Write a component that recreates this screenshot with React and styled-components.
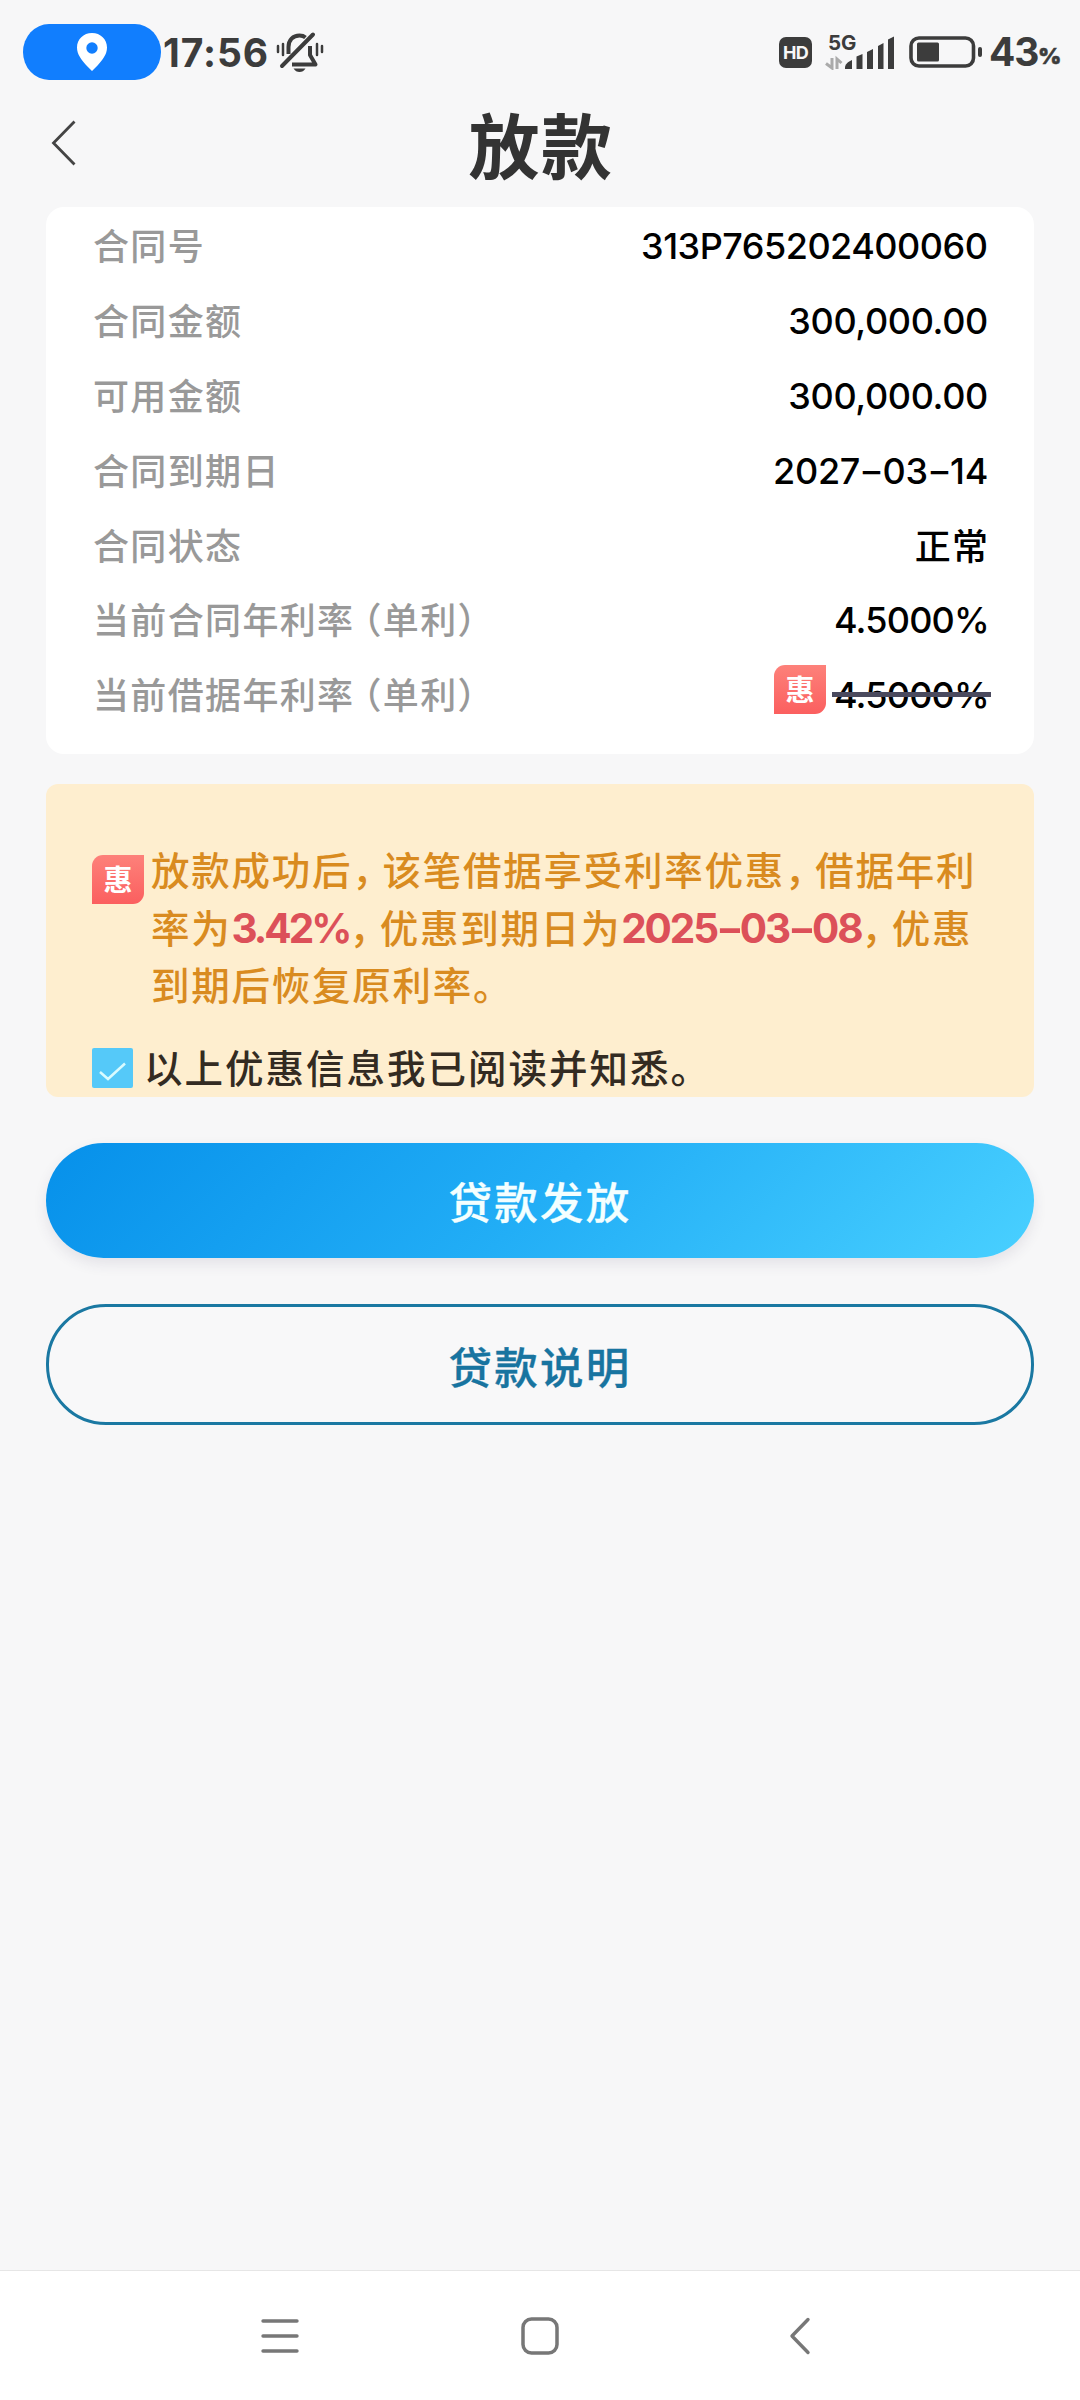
import React from 'react';
import styled, { createGlobalStyle } from 'styled-components';

const GlobalStyle = createGlobalStyle`
  * {
    box-sizing: border-box;
  }

  body {
    margin: 0;
    background: #f7f7f7;
    font-family: Inter, 'Noto Sans CJK SC', sans-serif;
  }
`;

const Screen = styled.div`
  display: flex;
  flex-direction: column;
  width: 1080px;
  height: 2400px;
  overflow: hidden;
  background: #f7f7f8;
`;

const StatusBar = styled.div`
  display: flex;
  justify-content: space-between;
  align-items: center;
  height: 104px;
  padding: 0 22px 0 23px;
  color: #3c3c3c;
`;

const StatusGroup = styled.div`
  display: flex;
  align-items: center;
`;

const LocationPill = styled.div`
  display: flex;
  justify-content: center;
  align-items: center;
  width: 138px;
  height: 56px;
  border-radius: 26px / 28px;
  background: #117efe;
`;

const Clock = styled.div`
  width: 115px;
  padding: 2px 0 0 2px;
  font-size: 39px;
  font-weight: 700;
  line-height: 56px;
  letter-spacing: 0.9px;
  white-space: nowrap;
`;

const HdBadge = styled.div`
  width: 33px;
  height: 31px;
  margin-right: 13px;
  border-radius: 7px;
  background: #3c3c3c;
  color: #f7f7f7;
  font-size: 18px;
  font-weight: 700;
  line-height: 31px;
  letter-spacing: -0.8px;
  text-align: center;
`;

const Signal = styled.div`
  position: relative;
  width: 70px;
  height: 36px;
  margin-right: 14px;
`;

const NetworkType = styled.span`
  position: absolute;
  top: -1px;
  left: 3px;
  font-size: 20.5px;
  font-weight: 700;
  line-height: 20px;
`;

const Percent = styled.div`
  display: flex;
  align-items: baseline;
  width: 69px;
  margin-left: 6px;
  padding-top: 6px;
  font-size: 39px;
  font-weight: 700;
  line-height: 56px;
  letter-spacing: -1.2px;

  small {
    position: relative;
    top: -2px;
    font-size: 22px;
    font-weight: 900;
    -webkit-text-stroke: 0.5px currentColor;
  }
`;

const Header = styled.header`
  display: grid;
  grid-template-columns: 80px 1fr 80px;
  align-items: center;
  height: 80px;
  margin-bottom: 23px;
`;

const BackButton = styled.button`
  display: flex;
  padding: 0 0 3px 51px;
  border: 0;
  background: none;
`;

const Title = styled.h1`
  margin: 0;
  padding: 6px 0 0 2px;
  color: #333;
  font-size: 71px;
  font-weight: 700;
  line-height: 74px;
  letter-spacing: 1.5px;
  text-align: center;
`;

const Content = styled.main`
  display: flex;
  flex: 1;
  flex-direction: column;
  padding: 0 46px;
`;

const ContractCard = styled.section`
  height: 547px;
  padding: 1px 46px 0 47px;
  border-radius: 18px;
  background: #fff;
`;

const Row = styled.div`
  display: flex;
  justify-content: space-between;
  align-items: center;
  height: 74.9px;
`;

const Label = styled.span`
  padding-bottom: 3px;
  color: #999;
  font-size: 36px;
  font-weight: 500;
  letter-spacing: 1.35px;
  white-space: nowrap;
`;

const OpenParen = styled.span`
  margin-left: 9px;
  font-feature-settings: 'halt';
`;

const Value = styled.span`
  display: flex;
  align-items: center;
  padding-top: ${({ $lift }) => ($lift ? 0 : 1)}px;
  padding-bottom: ${({ $lift }) => $lift || 0}px;
  color: #000;
  font-size: 36px;
  font-weight: 500;
  letter-spacing: ${({ $spacing }) => $spacing || 0}px;
  margin-right: ${({ $pull }) => -($pull || 0)}px;
  white-space: nowrap;
`;

const Dash = styled.span`
  display: inline-block;
  margin: 0 3px;
  transform: scaleX(1.5);
`;

const StruckRate = styled.span`
  position: relative;

  &::after {
    position: absolute;
    top: 19px;
    right: -2px;
    left: -2px;
    height: 5px;
    background: #4a4a5e;
    content: '';
  }
`;

const DiscountTag = styled.span`
  flex: none;
  width: 52px;
  height: 49px;
  margin: ${({ $margin }) => $margin || 0};
  border-radius: 11px 0;
  background: linear-gradient(180deg, #fd817a, #fb5f5f);
  color: #fff;
  font-size: 29px;
  font-weight: 700;
  line-height: 51px;
  letter-spacing: 0;
  text-align: center;
`;

const NoticeCard = styled.section`
  height: 313px;
  margin-top: 30px;
  padding: 59px 46px 0;
  border-radius: 12px;
  background: #feeecf;
`;

const NoticeBody = styled.div`
  display: flex;
  align-items: flex-start;
`;

const NoticeText = styled.p`
  margin: 0;
  color: #d98b20;
  font-size: 38.5px;
  font-weight: 500;
  line-height: 57.5px;
  letter-spacing: 1.75px;
  white-space: nowrap;
`;

const Comma = styled.span`
  font-feature-settings: 'halt';
  letter-spacing: 11px;
`;

const Highlight = styled.strong`
  color: #dc5059;
  font-size: 40.5px;
  font-weight: 700;
  line-height: 1;
  letter-spacing: ${({ $spacing }) => $spacing}px;
`;

const Agreement = styled.label`
  display: flex;
  align-items: center;
  margin-top: 24px;
  color: #332b22;
  font-size: 38.5px;
  font-weight: 500;
  line-height: 56px;
  letter-spacing: 2px;
  white-space: nowrap;
`;

const AgreementText = styled.span`
  padding-top: 2px;
  line-height: 54px;
`;

const Checkbox = styled.span`
  width: 41px;
  height: 40px;
  margin-right: 11px;
  border-radius: 2px;
  background: #55c9f9;
`;

const ActionButton = styled.button`
  width: 100%;
  height: ${({ $outline }) => ($outline ? 121 : 115)}px;
  margin-top: 46px;
  padding: ${({ $outline }) => ($outline ? '2px 0 0' : '0')};
  border: ${({ $outline }) => ($outline ? '3px solid #1a78a2' : '0')};
  border-radius: 60px;
  background: ${({ $outline }) =>
    $outline ? '#f8f8f9' : 'linear-gradient(135deg, #0690ea, #22aef6 50%, #49d0ff)'};
  box-shadow: ${({ $outline }) => ($outline ? 'none' : '0 6px 14px rgba(60, 50, 90, 0.1)')};
  color: ${({ $outline }) => ($outline ? '#1874a0' : '#f4ffff')};
  font-family: inherit;
  font-size: 43.5px;
  font-weight: 500;
  letter-spacing: 2.3px;
  -webkit-text-stroke: 0.3px currentColor;
`;

const SystemNav = styled.nav`
  display: flex;
  justify-content: space-between;
  align-items: center;
  height: 130px;
  padding: 0 269px 0 261px;
  border-top: 1px solid #e6e6e6;
  background: #fff;
`;

const PinIcon = () => (
  <svg width="32" height="40" viewBox="0 0 32 40">
    <path
      d="M16 1C7.5 1 1 7.3 1 15.5c0 7 4.500 12 9 17.500L16 39l6-6c4.500-5.500 9-10.500 9-17.500C31 7.300 24.500 1 16 1z"
      fill="#fff"
    />
    <circle cx="16" cy="16" r="5.700" fill="#117efe" />
  </svg>
);

const MutedBellIcon = () => (
  <svg width="48" height="42" viewBox="0 0 48 42" fill="none" stroke="#3c3c3c">
    <path d="M2 15v6M46 15v6" strokeWidth="2.500" strokeLinecap="round" />
    <path d="M7 13v11M41 13v11" strokeWidth="2.500" strokeLinecap="round" />
    <path
      d="M12.500 23v-7c0-7 4.500-11.500 11-11.500 2.500 0 4.500.7 6 2"
      strokeWidth="4"
    />
    <path d="M34 15v9l5.500 9.500H16" strokeWidth="4" strokeLinejoin="round" />
    <path d="M37 3.500L6 35" strokeWidth="4" strokeLinecap="round" />
    <path d="M17.500 37.500h12c-1.500 2.500-3.500 3.500-6 3.500s-4.500-1-6-3.500z" fill="#3c3c3c" stroke="none" />
  </svg>
);

const SignalIcon = () => (
  <svg width="70" height="36" viewBox="0 0 70 36" fill="#3c3c3c">
    <path d="M7 24v10L1 29.500M12 35V25l4.500 4" fill="none" stroke="#aaa" strokeWidth="3" />
    <path d="M20 33.500c0-3 3-6 7-7.500v9h-7z" />
    <path d="M31.500 22.500l6-2.500v15h-6z" />
    <path d="M42 18l6-3v20h-6z" />
    <path d="M53 12l5.500-3v26H53z" />
    <path d="M63 5.500l6-3V35h-6z" />
  </svg>
);

const BatteryIcon = () => (
  <svg width="74" height="32" viewBox="0 0 74 32">
    <rect x="2" y="2" width="62.500" height="28" rx="8" fill="none" stroke="#3c3c3c" strokeWidth="3.600" />
    <rect x="8" y="6.500" width="22" height="19" rx="1.500" fill="#3c3c3c" />
    <rect x="69" y="11" width="4" height="10" rx="2" fill="#3c3c3c" />
  </svg>
);

const ContractLabel = ({ text, suffix }) => (
  <Label>
    {text}
    {suffix && (
      <>
        <OpenParen>（</OpenParen>
        {suffix}）
      </>
    )}
  </Label>
);

const rows = [
  { label: '合同号', value: '313P765202400060', spacing: -0.5, pull: -0.5 },
  { label: '合同金额', value: '300,000.00', spacing: -0.35 },
  { label: '可用金额', value: '300,000.00', spacing: -0.35 },
  {
    label: '合同到期日',
    value: (
      <span>
        2027<Dash>-</Dash>03<Dash>-</Dash>14
      </span>
    ),
    spacing: -0.3,
  },
  { label: '合同状态', value: '正常', spacing: 1.35, pull: 1.35, lift: 3 },
  { label: '当前合同年利率', suffix: '单利', value: '4.5000%', spacing: -0.8, pull: 1 },
];

const App = () => (
  <>
    <GlobalStyle />
    <Screen>
      <StatusBar>
        <StatusGroup>
          <LocationPill>
            <PinIcon />
          </LocationPill>
          <Clock>17:56</Clock>
          <MutedBellIcon />
        </StatusGroup>
        <StatusGroup>
          <HdBadge>HD</HdBadge>
          <Signal>
            <NetworkType>5G</NetworkType>
            <SignalIcon />
          </Signal>
          <BatteryIcon />
          <Percent>
            43<small>%</small>
          </Percent>
        </StatusGroup>
      </StatusBar>

      <Header>
        <BackButton>
          <svg width="26" height="46" viewBox="0 0 26 46" fill="none" stroke="#444" strokeWidth="2.800">
            <path d="M23.500 1.500L2.500 23l21 21.500" />
          </svg>
        </BackButton>
        <Title>放款</Title>
      </Header>

      <Content>
        <ContractCard>
          {rows.map(row => (
            <Row key={row.label}>
              <ContractLabel text={row.label} suffix={row.suffix} />
              <Value $spacing={row.spacing} $pull={row.pull} $lift={row.lift}>
                {row.value}
              </Value>
            </Row>
          ))}
          <Row>
            <ContractLabel text="当前借据年利率" suffix="单利" />
            <Value $spacing={-0.8} $pull={1}>
              <DiscountTag $margin="-11px 8px 0 0">惠</DiscountTag>
              <StruckRate>4.5000%</StruckRate>
            </Value>
          </Row>
        </ContractCard>

        <NoticeCard>
          <NoticeBody>
            <DiscountTag $margin="12px 7px 0 0">惠</DiscountTag>
            <NoticeText>
              放款成功后<Comma>，</Comma>该笔借据享受利率优惠<Comma>，</Comma>借据年利
              <br />
              率为<Highlight $spacing={-3}>3.42%</Highlight>
              <Comma>，</Comma>优惠到期日为
              <Highlight $spacing={-2.1}>
                2025<Dash>-</Dash>03<Dash>-</Dash>08
              </Highlight>
              <Comma>，</Comma>优惠
              <br />
              到期后恢复原利率。
            </NoticeText>
          </NoticeBody>
          <Agreement>
            <Checkbox>
              <svg width="41" height="40" viewBox="0 0 41 40" fill="none" stroke="#d9fbff" strokeWidth="2.500">
                <path d="M8 22l8 7L33 13.500" />
              </svg>
            </Checkbox>
            <AgreementText>以上优惠信息我已阅读并知悉。</AgreementText>
          </Agreement>
        </NoticeCard>

        <ActionButton>贷款发放</ActionButton>
        <ActionButton $outline>贷款说明</ActionButton>
      </Content>

      <SystemNav>
        <svg width="38" height="36" viewBox="0 0 38 36" stroke="#777" strokeWidth="3.400" strokeLinecap="round">
          <path d="M2 3h34M2 18h34M2 33h34" />
        </svg>
        <svg width="38" height="38" viewBox="0 0 38 38" fill="none" stroke="#777" strokeWidth="3.500">
          <rect x="2" y="2" width="34" height="34" rx="8.500" />
        </svg>
        <svg width="30" height="38" viewBox="0 0 30 38" fill="none" stroke="#777" strokeWidth="3.400" strokeLinecap="round" strokeLinejoin="round">
          <path d="M27 2.500L11 19l16 16.500" />
        </svg>
      </SystemNav>
    </Screen>
  </>
);

export default App;
